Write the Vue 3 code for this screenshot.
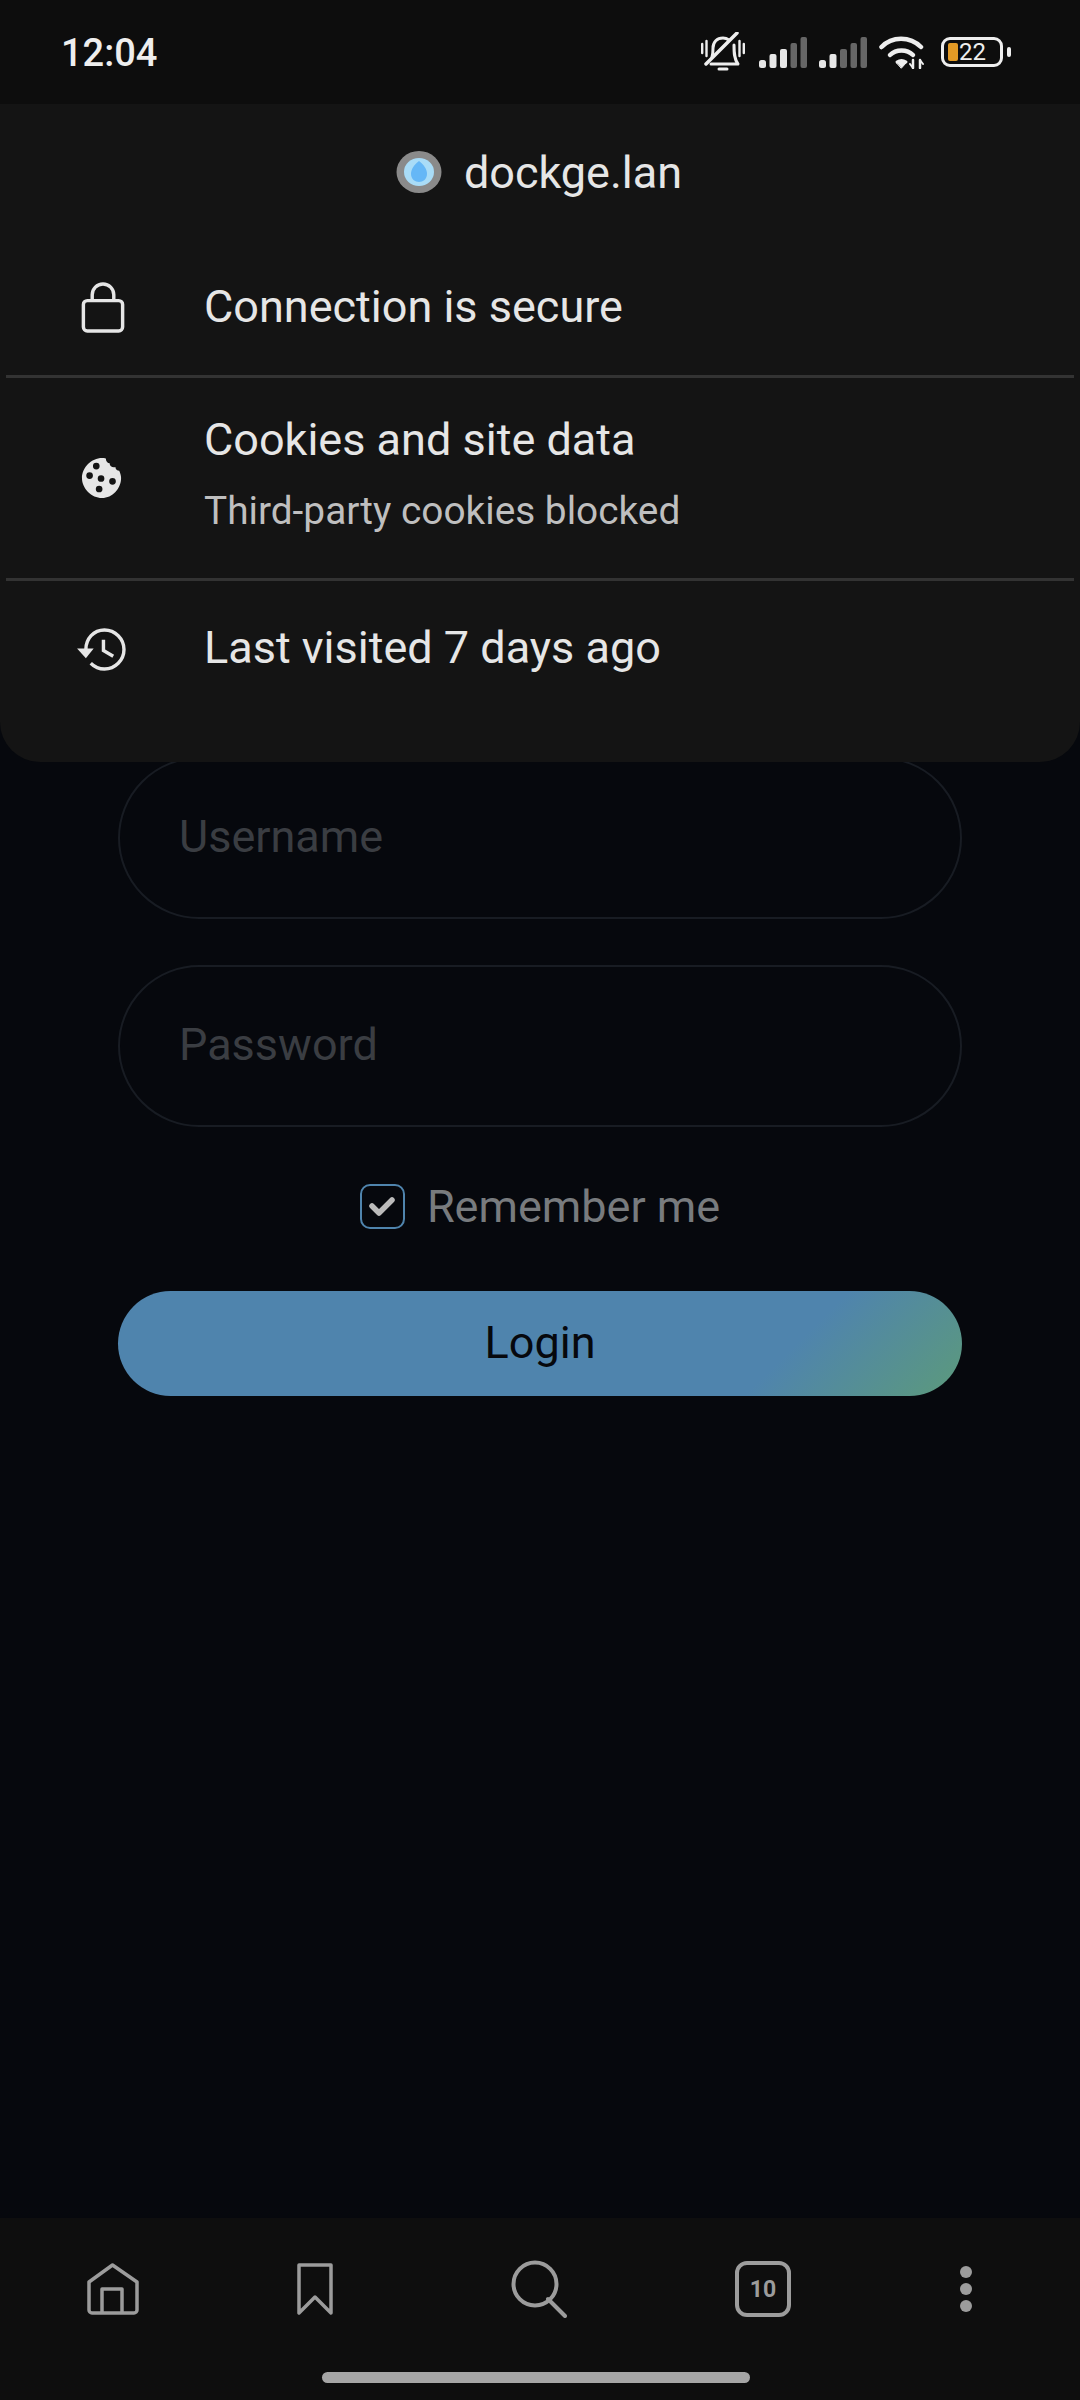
<script setup>
const rows = [
  { id: 'lock', title: 'Connection is secure' },
  { id: 'cookie', title: 'Cookies and site data', sub: 'Third-party cookies blocked' },
  { id: 'history', title: 'Last visited 7 days ago' }
]
</script>

<template>
  <div class="page">
    <div class="status-bar">
      <span class="time">12:04</span>
      <div class="status-icons">
        <svg class="bell" width="44" height="40" viewBox="0 0 44 40" fill="none" stroke="#eee" stroke-width="3" stroke-linecap="round" stroke-linejoin="round">
          <path d="M1.200 12v9M5.500 9v15M38.500 9v15M42.800 12v9" stroke-width="2.400" />
          <path d="M11 25c1-3 1-6 1-9 0-6 4-10 10-10 2 0 4 .6 6 2M33 13c0 7 0 14 4 19H10" />
          <path d="M5 32 36 1" stroke-width="3.500" />
          <path d="M18 37h8" stroke-width="3" />
        </svg>
        <svg v-for="n in 2" :key="n" class="signal" width="48" height="32" viewBox="0 0 48 32">
          <rect x="0" y="24" width="7" height="8" rx="2.500" fill="#e6e6e6" />
          <rect x="10.500" y="18" width="7" height="14" rx="2" fill="#e6e6e6" />
          <rect x="21" y="13" width="7" height="19" rx="2" :fill="n === 1 ? '#e6e6e6' : '#666'" />
          <rect x="31.500" y="7" width="6.500" height="25" rx="2" fill="#666" />
          <rect x="41.500" y="1" width="6.500" height="31" rx="2" fill="#666" />
        </svg>
        <svg class="wifi" width="46" height="34" viewBox="0 0 46 34" fill="none" stroke="#eee" stroke-width="4.500" stroke-linecap="round">
          <path d="M2.500 12C13 1 31 1 42 12" />
          <path d="M11 20c6-6 17-6 23 0" />
          <path d="M18 27c3-2 6-2 9 0" stroke-width="3" />
          <path d="M18 28l4.500-2 4.500 2-4.500 5z" fill="#eee" stroke-width="1" />
          <path d="M34 25v8M41 33v-8" stroke-width="2.500" />
          <path d="M31 29l3 4M44 29l-3-4" stroke-width="2" />
        </svg>
        <div class="battery">
          <div class="battery-body">
            <span class="battery-fill"></span>
            <span class="battery-num">22</span>
          </div>
          <span class="battery-nub"></span>
        </div>
      </div>
    </div>

    <main class="login">
      <div class="field">Username</div>
      <div class="field">Password</div>
      <label class="remember">
        <span class="check">
          <svg width="26" height="20" viewBox="0 0 26 20" fill="none" stroke="#bbb" stroke-width="5.500" stroke-linecap="round" stroke-linejoin="round">
            <path d="M3 10l7 7L23 4" />
          </svg>
        </span>
        Remember me
      </label>
      <button class="login-btn">Login</button>
    </main>

    <nav class="bottom-nav">
      <div class="nav-icons">
        <svg width="52" height="52" viewBox="0 0 52 52" fill="none" stroke="#9c9c9c" stroke-width="3.500" stroke-linejoin="round">
          <path d="M2 19 25.500 2 50 19v28a3 3 0 0 1-3 3H5a3 3 0 0 1-3-3z" />
          <path d="M15 50V26h20v24" />
        </svg>
        <svg class="nav-bookmark" width="36" height="52" viewBox="0 0 36 52" fill="none" stroke="#9c9c9c" stroke-width="3.500" stroke-linejoin="round">
          <path d="M2 2h32v48L18 34 2 50z" />
        </svg>
        <svg class="nav-search" width="56" height="58" viewBox="0 0 56 58" fill="none" stroke="#9c9c9c" stroke-width="4" stroke-linecap="round">
          <circle cx="24" cy="24" r="21.500" />
          <path d="M37 39l17 17" />
        </svg>
        <div class="tab-count">10</div>
        <div class="dots"><i></i><i></i><i></i></div>
      </div>
      <div class="home-bar"></div>
    </nav>

    <section class="site-panel">
      <header class="site-head">
        <svg class="favicon" width="46" height="44" viewBox="0 0 46 44">
          <ellipse cx="23" cy="22" rx="22.500" ry="21" fill="#8a8a8a" />
          <ellipse cx="23" cy="22" rx="15" ry="14" fill="#a9dcf7" />
          <path d="M23 11c5 4 8 8 8 13 0 5-4 8-8 8s-8-3-8-8c0-5 3-9 8-13z" fill="#65b7f6" />
        </svg>
        <span>dockge.lan</span>
      </header>

      <div v-for="row in rows" :key="row.id" class="row" :class="'row-' + row.id">
        <div class="row-icon">
          <svg v-if="row.id === 'lock'" width="44" height="51" viewBox="0 0 44 52" fill="none" stroke="#e6e6e6" stroke-width="3.500" stroke-linejoin="round">
            <rect x="2" y="19" width="40" height="31" rx="4" />
            <path d="M11 19v-6a11 11 0 0 1 22 0v6" />
          </svg>
          <svg v-else-if="row.id === 'cookie'" width="42" height="42" viewBox="0 0 44 44">
            <path fill="#e6e6e6" fill-rule="evenodd" d="M22 1c1 0 3 0 4 .5 0 3 2 5 4 5 0 3 3 5 6 4 0 2 2 4 4 4 1 2 2 5 2 7.500C42 33 33 43 22 43S1 33 1 22 11 1 22 1zM16 6a3.500 3.500 0 1 0 0 7 3.500 3.500 0 0 0 0-7zM9 16a3.500 3.500 0 1 0 0 7 3.500 3.500 0 0 0 0-7zM21 19a3.500 3.500 0 1 0 0 7 3.500 3.500 0 0 0 0-7zM33 22a3.500 3.500 0 1 0 0 7 3.500 3.500 0 0 0 0-7zM19 30a3.500 3.500 0 1 0 0 7 3.500 3.500 0 0 0 0-7z" />
          </svg>
          <svg v-else class="history-icon" width="49" height="43" viewBox="0 0 50 44" fill="none" stroke="#e6e6e6" stroke-width="3.500">
            <path d="M9 22C9 11 17 2 28 2s20 9 20 20-9 20-20 20c-5 0-10-2-14-6" />
            <path d="M27 12v11l10 6" />
            <path d="M0 21h17l-8 10z" fill="#e6e6e6" stroke="none" />
          </svg>
        </div>
        <div class="row-text">
          <div class="row-title">{{ row.title }}</div>
          <div v-if="row.sub" class="row-sub">{{ row.sub }}</div>
        </div>
      </div>
    </section>
  </div>
</template>

<style>
html, body { margin: 0; background: #06080d; }
</style>

<style scoped>
.page { position: relative; width: 1080px; height: 2400px; display: flex; flex-direction: column; background: #06080d; font-family: Roboto, "Noto Sans", sans-serif; overflow: hidden; }

.status-bar { height: 104px; flex: none; box-sizing: border-box; padding: 2px 69px 0 61px; display: flex; justify-content: space-between; align-items: center; background: #0d0d0d; color: #eee; }
.time { font-size: 38px; font-weight: 500; }
.status-icons { display: flex; align-items: center; gap: 12px; margin-top: -2px; }
.bell { margin-right: 2px; }
.battery { display: flex; align-items: center; gap: 4px; margin-left: 4px; }
.battery-body { width: 62px; height: 30px; box-sizing: border-box; border: 3px solid #eee; border-radius: 9px; display: flex; align-items: center; padding-left: 4px; }
.battery-fill { width: 10px; height: 18px; background: #e39a25; border-radius: 2px; }
.battery-num { font-size: 24px; line-height: 24px; margin-left: 1px; color: #eee; }
.battery-nub { width: 4px; height: 10px; background: #eee; border-radius: 2px; }

.login { flex: 1; box-sizing: border-box; padding: 653px 118px 0; display: flex; flex-direction: column; }
.field { height: 162px; box-sizing: border-box; border: 2px solid #181c23; border-radius: 81px; padding: 0 0 3px 59px; margin-bottom: 46px; display: flex; align-items: center; font-size: 45px; color: #3a3d42; }
.remember { display: flex; align-items: center; justify-content: center; gap: 22px; height: 44px; margin-top: 11px; font-size: 45px; color: #787b7e; }
.check { width: 45px; height: 45px; box-sizing: border-box; border: 2px solid #4f84ad; border-radius: 10px; display: flex; align-items: center; justify-content: center; }
.login-btn { height: 105px; margin-top: 63px; padding: 0 0 2px; border: none; border-radius: 53px; font-family: inherit; font-size: 45px; color: #06080d; background: linear-gradient(135deg, #4f84ad 0, #4f84ad 77%, #5c9a7b 100%); }

.bottom-nav { height: 182px; flex: none; background: #0e0e0e; display: flex; flex-direction: column; }
.nav-icons { height: 154px; box-sizing: border-box; padding: 0 0 12px 87px; display: flex; align-items: center; }
.nav-bookmark { margin-left: 158px; }
.nav-search { margin-left: 178px; }
.tab-count { width: 56px; height: 56px; margin-left: 168px; box-sizing: border-box; border: 4px solid #9c9c9c; border-radius: 12px; display: flex; align-items: center; justify-content: center; font-size: 23px; font-weight: 700; color: #9c9c9c; }
.dots { display: flex; flex-direction: column; gap: 5px; margin-left: 169px; }
.dots i { width: 12px; height: 12px; border-radius: 50%; background: #9c9c9c; }
.home-bar { width: 428px; height: 11px; margin-left: 322px; border-radius: 6px; background: #a6a6a6; }

.site-panel { position: absolute; top: 104px; left: 0; width: 1080px; height: 658px; background: #141414; border-radius: 0 0 40px 40px; color: #e6e6e6; }
.site-head { height: 136px; display: flex; align-items: center; justify-content: center; gap: 22px; font-size: 45px; }
.favicon { margin-left: -2px; }
.row { margin: 0 6px; display: flex; align-items: center; box-sizing: border-box; font-size: 45px; }
.row-lock { height: 135px; }
.row-cookie { height: 206px; border-top: 3px solid #333; border-bottom: 3px solid #333; }
.row-history { height: 136px; }
.row-icon { width: 198px; padding-left: 75px; box-sizing: border-box; display: flex; align-items: center; }
.history-icon { margin-left: -4px; }
.row-text { margin-bottom: 3px; }
.row-cookie .row-text { margin-bottom: 11px; }
.row-sub { margin-top: 22px; font-size: 38.800px; color: #bfbfbf; }
</style>
